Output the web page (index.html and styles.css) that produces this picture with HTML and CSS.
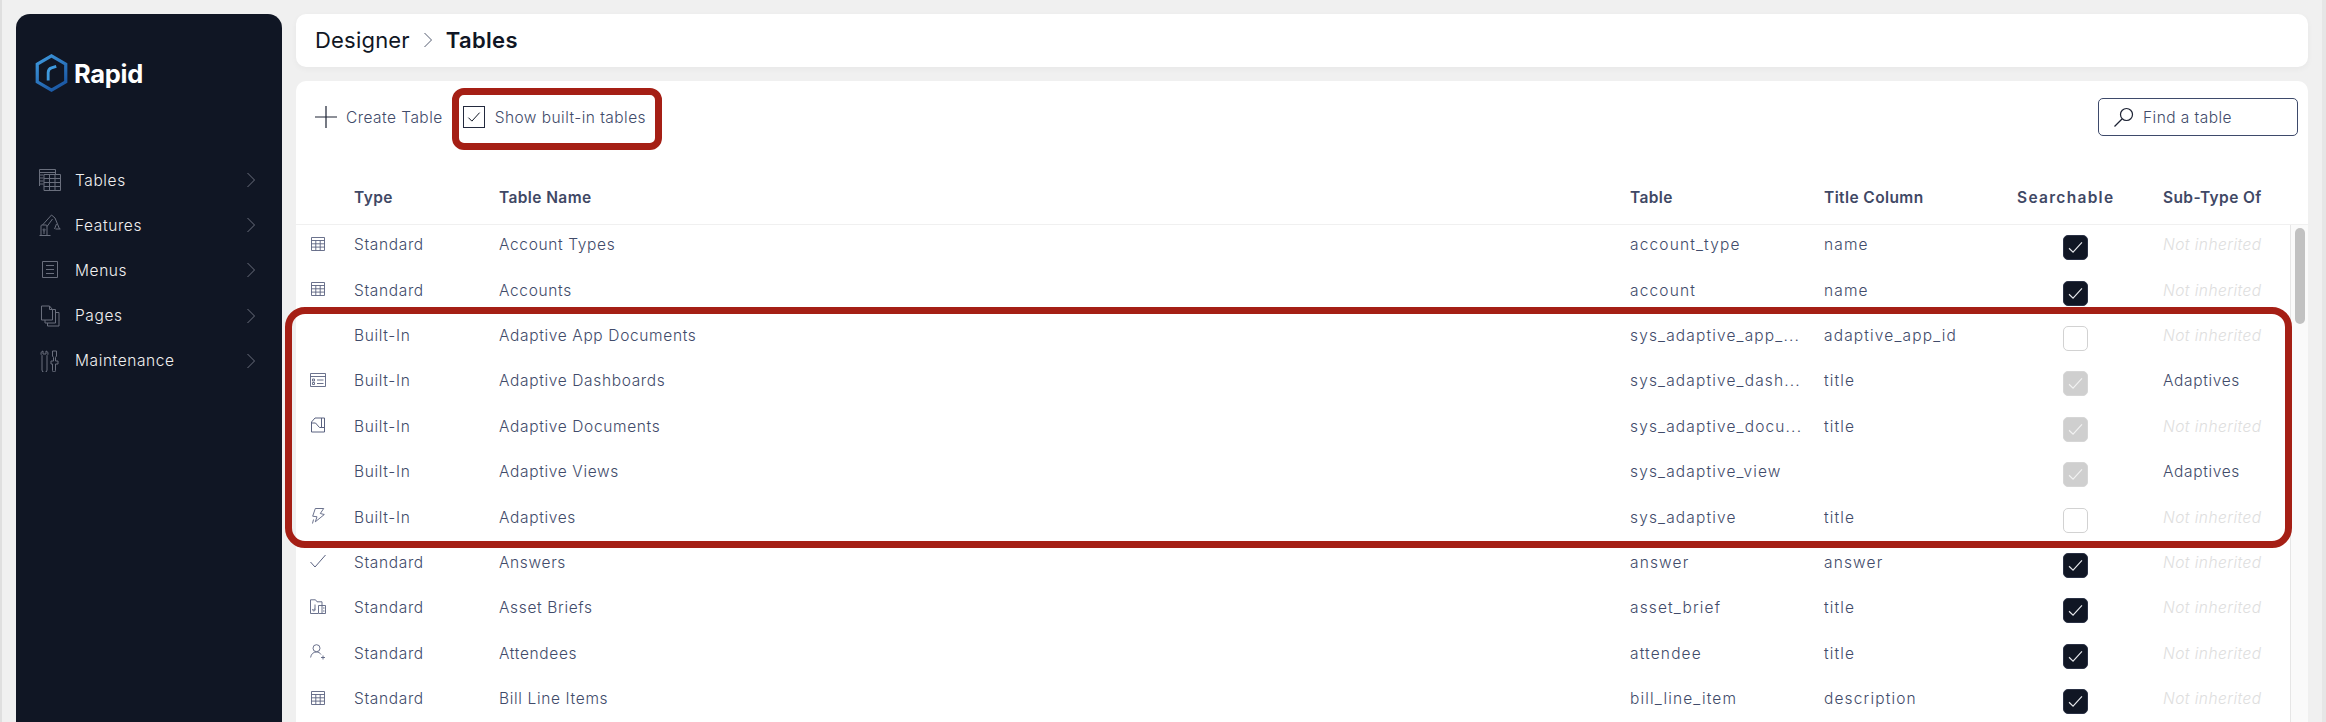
FILE: index.html
```html
<!DOCTYPE html>
<html lang="en">
<head>
    <meta charset="UTF-8">
    <title>Designer - Tables</title>
    <link rel="stylesheet" href="styles.css">
</head>
<body>
    <svg class="defs" width="0" height="0">
        <defs>
            <linearGradient id="hexGrad" x1="0" y1="0" x2="0.6" y2="1">
                <stop offset="0" stop-color="#3f9ade"/>
                <stop offset="1" stop-color="#1c5aa6"/>
            </linearGradient>
            <symbol id="i-grid" viewBox="0 0 16 16">
                <path d="M1.5 1.5h13v13h-13zM1.5 4.5h13M1.5 7.8h13M1.5 11.1h13M5.8 4.500v10M10.2 4.5v10" fill="none" stroke="currentColor" stroke-width=".9"/>
            </symbol>
            <symbol id="i-dash" viewBox="0 0 16 16">
                <path d="M.5 1.5h15v13H.5zM.5 4.5h15M7 8h6.5M7 11.5h6.5M2.5 7h2v2h-2zM2.500 10.5h2v2h-2z" fill="none" stroke="currentColor" stroke-width=".9"/>
            </symbol>
            <symbol id="i-doc" viewBox="0 0 16 16">
                <path d="M1.5 15V5L5 1h9.5v14zM1.5 6h4l4 4.5h5M11.5 1v9.5" fill="none" stroke="currentColor"/>
            </symbol>
            <symbol id="i-bolt" viewBox="0 0 16 16">
                <path d="M5.3.5h8.400l-3.400 5 4 1-9 7.300L7 8.800l-4.300-.6zM3.500 11.500L2.500 15.500" fill="none" stroke="currentColor" stroke-linejoin="round" stroke-width=".9"/>
            </symbol>
            <symbol id="i-check" viewBox="0 0 16 16">
                <path d="M.5 9l4.500 5L15.500 2" fill="none" stroke="currentColor"/>
            </symbol>
            <symbol id="i-brief" viewBox="0 0 16 16">
                <path d="M8 14.500H.5V.8h5l1.500 2h5v3.700M8.500 6.500h7v8h-7zM12 6.500v8M13 9h1.500M13 12h1.500M3.500 10.500L5 10V5.500M5 10a1.300 1.300 0 1 1-2.200 0" fill="none" stroke="currentColor" stroke-width=".9"/>
            </symbol>
            <symbol id="i-person" viewBox="0 0 16 16">
                <circle cx="6.5" cy="4.2" r="3.5" fill="none" stroke="currentColor" stroke-width=".9"/>
                <path d="M.6 13.500c.5-3.500 2.700-5.500 5.900-5.500 2 0 3.500.8 4.500 2.500M13 11.500v4M11 13.500h4" fill="none" stroke="currentColor" stroke-width=".9"/>
            </symbol>
            <symbol id="i-tick" viewBox="0 0 16 16">
                <path d="M3.5 8.500l2.800 2.800 6.200-6.800" fill="none" stroke="currentColor" stroke-width=".8"/>
            </symbol>
            <symbol id="i-chevron" viewBox="0 0 8 16">
                <path d="M.5 1l7 7-7 7" fill="none" stroke="currentColor"/>
            </symbol>
        </defs>
    </svg>

    <div class="page">
        <aside class="sidebar">
            <div class="logo">
                <svg class="logo-mark" viewBox="0 0 34 40">
                    <path d="M17 2l15 8.700v18.600L17 38 2 29.300V10.700z" fill="none" stroke="url(#hexGrad)" stroke-width="3.4"/>
                    <path d="M13.500 28v-8.500q0-4 3.500-5l5-1.500" fill="none" stroke="#3f9ade" stroke-width="3"/>
                </svg>
                <span class="logo-text">Rapid</span>
            </div>
            <nav class="nav">
                <a class="nav-item">
                    <svg class="nav-icon" viewBox="0 0 22 22"><path d="M.5 17V.5h16V5M.5 3.500h16M.5 6h4M.5 9h4M.5 12h4M.5 15h4M5 5.500h16.500v16H5zM5 9.500h16.500M5 13.500h16.500M5 17.500h16.500M10.500 5.500v16M16 5.500v16" fill="none" stroke="currentColor"/></svg>
                    <span class="nav-label">Tables</span>
                    <svg class="nav-chevron"><use href="#i-chevron"/></svg>
                </a>
                <a class="nav-item">
                    <svg class="nav-icon" viewBox="0 0 22 22"><path d="M.5 21.500h11M2 21.500V12q0-1 1-1h4q1 0 1 1v9.500M5 15a1 1 0 1 0 .1 0M5 17v3M3.500 11l9-10 3.500 3M8 12.500L13.500 5M16 4l4.500 11M16.500 15h5M17.500 10l-2 5" fill="none" stroke="currentColor"/></svg>
                    <span class="nav-label">Features</span>
                    <svg class="nav-chevron"><use href="#i-chevron"/></svg>
                </a>
                <a class="nav-item">
                    <svg class="nav-icon" viewBox="0 0 22 22"><path d="M3.500 2.500h15v16h-15zM7 6.500h8M7 10.500h8M7 14.500h8" fill="none" stroke="currentColor"/></svg>
                    <span class="nav-label">Menus</span>
                    <svg class="nav-chevron"><use href="#i-chevron"/></svg>
                </a>
                <a class="nav-item">
                    <svg class="nav-icon" viewBox="0 0 22 22"><path d="M2.500 1h8l3 3.500V15h-11zM10.500 1v3.500h3M13.500 4.500h3V18H6v-3M16.500 7.500H20V21H8.500v-3" fill="none" stroke="currentColor"/></svg>
                    <span class="nav-label">Pages</span>
                    <svg class="nav-chevron"><use href="#i-chevron"/></svg>
                </a>
                <a class="nav-item">
                    <svg class="nav-icon" viewBox="0 0 22 22"><path d="M4 1v3h3V1a2.500 2.500 0 0 1 1 4.500V20a2.500 2.500 0 0 1-5 0V5.500A2.500 2.500 0 0 1 4 1zM13.500 1h4v5l-1 1.500V11H19v3h-2.500v6.500a1.500 1.500 0 0 1-3 0V14H12v-3h2.500V7.500l-1-1.500z" fill="none" stroke="currentColor"/></svg>
                    <span class="nav-label">Maintenance</span>
                    <svg class="nav-chevron"><use href="#i-chevron"/></svg>
                </a>
            </nav>
        </aside>

        <main class="content">
            <header class="crumbs">
                <span class="crumb">Designer</span>
                <svg class="crumb-sep"><use href="#i-chevron"/></svg>
                <span class="crumb crumb-current">Tables</span>
            </header>

            <section class="panel">
                <div class="toolbar">
                    <a class="create-btn">
                        <svg class="plus" viewBox="0 0 22 22"><path d="M11 0v22M0 11h22" stroke="#1c2233" stroke-width="1.2"/></svg>
                        Create Table
                    </a>
                    <label class="show-builtin">
                        <span class="toggle"><svg viewBox="0 0 16 16"><use href="#i-tick"/></svg></span>
                        Show built-in tables
                    </label>
                    <div class="search">
                        <svg class="search-icon" viewBox="0 0 20 20"><circle cx="12.5" cy="7.5" r="6" fill="none" stroke="#1c2233" stroke-width="1.2"/><path d="M8 12L.5 19.500" stroke="#1c2233" stroke-width="1.2"/></svg>
                        <span>Find a table</span>
                    </div>
                </div>

                <div class="row head-row">
                    <span></span>
                    <span>Type</span>
                    <span>Table Name</span>
                    <span>Table</span>
                    <span>Title Column</span>
                    <span class="head-wide">Searchable</span>
                    <span>Sub-Type Of</span>
                </div>

                <div class="table-body">
                    <div class="rows">
                        <div class="row">
                            <svg class="row-icon"><use href="#i-grid"/></svg>
                            <span>Standard</span><span>Account Types</span><span class="key">account_type</span><span class="key">name</span>
                            <span class="box on"><svg viewBox="0 0 16 16"><use href="#i-tick"/></svg></span>
                            <span class="muted">Not inherited</span>
                        </div>
                        <div class="row">
                            <svg class="row-icon"><use href="#i-grid"/></svg>
                            <span>Standard</span><span>Accounts</span><span class="key">account</span><span class="key">name</span>
                            <span class="box on"><svg viewBox="0 0 16 16"><use href="#i-tick"/></svg></span>
                            <span class="muted">Not inherited</span>
                        </div>
                        <div class="row">
                            <span></span>
                            <span>Built-In</span><span>Adaptive App Documents</span><span class="key">sys_adaptive_app_...</span><span class="key">adaptive_app_id</span>
                            <span class="box"></span>
                            <span class="muted">Not inherited</span>
                        </div>
                        <div class="row">
                            <svg class="row-icon"><use href="#i-dash"/></svg>
                            <span>Built-In</span><span>Adaptive Dashboards</span><span class="key">sys_adaptive_dash...</span><span class="key">title</span>
                            <span class="box off"><svg viewBox="0 0 16 16"><use href="#i-tick"/></svg></span>
                            <span>Adaptives</span>
                        </div>
                        <div class="row">
                            <svg class="row-icon"><use href="#i-doc"/></svg>
                            <span>Built-In</span><span>Adaptive Documents</span><span class="key">sys_adaptive_docu...</span><span class="key">title</span>
                            <span class="box off"><svg viewBox="0 0 16 16"><use href="#i-tick"/></svg></span>
                            <span class="muted">Not inherited</span>
                        </div>
                        <div class="row">
                            <span></span>
                            <span>Built-In</span><span>Adaptive Views</span><span class="key">sys_adaptive_view</span><span></span>
                            <span class="box off"><svg viewBox="0 0 16 16"><use href="#i-tick"/></svg></span>
                            <span>Adaptives</span>
                        </div>
                        <div class="row">
                            <svg class="row-icon"><use href="#i-bolt"/></svg>
                            <span>Built-In</span><span>Adaptives</span><span class="key">sys_adaptive</span><span class="key">title</span>
                            <span class="box"></span>
                            <span class="muted">Not inherited</span>
                        </div>
                        <div class="row">
                            <svg class="row-icon"><use href="#i-check"/></svg>
                            <span>Standard</span><span>Answers</span><span class="key">answer</span><span class="key">answer</span>
                            <span class="box on"><svg viewBox="0 0 16 16"><use href="#i-tick"/></svg></span>
                            <span class="muted">Not inherited</span>
                        </div>
                        <div class="row">
                            <svg class="row-icon"><use href="#i-brief"/></svg>
                            <span>Standard</span><span>Asset Briefs</span><span class="key">asset_brief</span><span class="key">title</span>
                            <span class="box on"><svg viewBox="0 0 16 16"><use href="#i-tick"/></svg></span>
                            <span class="muted">Not inherited</span>
                        </div>
                        <div class="row">
                            <svg class="row-icon"><use href="#i-person"/></svg>
                            <span>Standard</span><span>Attendees</span><span class="key">attendee</span><span class="key">title</span>
                            <span class="box on"><svg viewBox="0 0 16 16"><use href="#i-tick"/></svg></span>
                            <span class="muted">Not inherited</span>
                        </div>
                        <div class="row">
                            <svg class="row-icon"><use href="#i-grid"/></svg>
                            <span>Standard</span><span>Bill Line Items</span><span class="key">bill_line_item</span><span class="key">description</span>
                            <span class="box on"><svg viewBox="0 0 16 16"><use href="#i-tick"/></svg></span>
                            <span class="muted">Not inherited</span>
                        </div>
                    </div>
                    <div class="scroll-track"><div class="scroll-thumb"></div></div>
                </div>
            </section>
        </main>

        <!-- red callouts drawn on top of the screenshot -->
        <div class="callout callout-toggle"></div>
        <div class="callout callout-rows"></div>
    </div>
</body>
</html>
```

FILE: styles.css
```css
* {
    box-sizing: border-box;
}
html, body {
    margin: 0;
    height: 100%;
}
body {
    font-family: Inter, "Open Sans", sans-serif;
    font-size: 15.5px;
    font-weight: 300;
    color: #414b6a;
    background: #f0f0f0;
    overflow: hidden;
}
.defs {
    position: absolute;
}
.page {
    position: relative;
    display: flex;
    gap: 14px;
    height: 100vh;
    padding: 14px 14px 0 14px;
    border-left: 2px solid #dfdfdf;
    border-right: 4px solid #e6e6e6;
    overflow: hidden;
}

/* sidebar */
.sidebar {
    flex: 0 0 266px;
    background: #101624;
    border-radius: 14px 14px 0 0;
    padding: 40px 0 0 19px;
}
.logo {
    display: flex;
    align-items: center;
    gap: 6px;
    height: 38px;
}
.logo-mark {
    width: 33px;
    height: 38px;
}
.logo-text {
    font-size: 25.5px;
    font-weight: 700;
    color: #fff;
    letter-spacing: -0.3px;
}
.nav {
    margin-top: 65.5px;
}
.nav-item {
    display: flex;
    align-items: center;
    height: 45.2px;
    color: #f0f0f0;
}
.nav-icon {
    width: 22px;
    height: 22px;
    margin: 0 14px 0 4px;
    color: #6a6f7d;
    flex-shrink: 0;
}
.nav-label {
    flex: 1;
    font-size: 15.5px;
    font-weight: 300;
    letter-spacing: 0.6px;
}
.nav-chevron {
    width: 8px;
    height: 16px;
    margin-right: 27px;
    color: #6a6f7d;
}

/* main column */
.content {
    flex: 1;
    min-width: 0;
    display: flex;
    flex-direction: column;
    gap: 14px;
}
.crumbs {
    display: flex;
    align-items: center;
    height: 53px;
    padding: 0 20px 2px 19px;
    background: #fff;
    border-radius: 10px;
    box-shadow: 0 2px 6px rgba(0, 0, 0, 0.04);
}
.crumb {
    font-size: 22px;
    font-weight: 400;
    color: #101624;
    letter-spacing: 0.2px;
}
.crumb-current {
    font-weight: 600;
    letter-spacing: 0.3px;
}
.crumb-sep {
    width: 8px;
    height: 16px;
    margin: 0 14px;
    color: #555c70;
}
.panel {
    flex: 1;
    min-height: 0;
    background: #fff;
    border-radius: 10px 10px 0 0;
}

/* toolbar */
.toolbar {
    display: flex;
    align-items: center;
    height: 72px;
    padding: 0 10px 0 19px;
    letter-spacing: 0.45px;
}
.create-btn {
    display: flex;
    align-items: center;
    gap: 9px;
}
.plus {
    width: 22px;
    height: 22px;
}
.show-builtin {
    display: flex;
    align-items: center;
    gap: 10px;
    margin-left: 20px;
}
.toggle {
    flex-shrink: 0;
    width: 22px;
    height: 22px;
    border: 1.5px solid #232a3e;
    color: #101624;
    display: flex;
}
.search {
    display: flex;
    align-items: center;
    gap: 9px;
    width: 200px;
    height: 38px;
    margin-left: auto;
    padding-left: 15px;
    border: 1.5px solid #3e4a6b;
    border-radius: 5px;
}
.search-icon {
    width: 20px;
    height: 20px;
}

/* table */
.row {
    display: grid;
    grid-template-columns: 58px 145px 1131px 194px 193px 146px 1fr;
    align-items: center;
    height: 45.4px;
    letter-spacing: 0.65px;
}
.row > span:not(.box) {
    padding-bottom: 6px;
}
.row > .key {
    letter-spacing: 1.15px;
}
.head-row {
    height: 72px;
    font-weight: 600;
    color: #3f4865;
    border-bottom: 1px solid #f0f0f0;
    letter-spacing: 0.4px;
}
.head-row > span:not(.box) {
    padding-bottom: 0;
    padding-top: 18px;
}
.head-row > .head-wide {
    letter-spacing: 1.3px;
}
.table-body {
    display: flex;
}
.rows {
    flex: 1;
    min-width: 0;
}
.row-icon {
    width: 16px;
    height: 16px;
    margin: 0 0 8px 14px;
    color: #5a6280;
}
.box {
    display: block;
    width: 25px;
    height: 25px;
    margin-left: 46px;
    border-radius: 5px;
    border: 1.5px solid #d2d2d2;
    background: #fff;
}
.box svg {
    display: block;
    width: 100%;
    height: 100%;
}
.box.on {
    background: #101624;
    border-color: #2a3145;
    color: #e6e8ec;
}
.box.off {
    background: #cfcfcf;
    border-color: #d6d6d6;
    color: #f2f2f2;
}
.row > .muted {
    font-style: italic;
    font-weight: 300;
    color: #dedede;
    letter-spacing: 0.45px;
}
.scroll-track {
    flex: 0 0 18px;
    padding: 3px 3px 0 4px;
    background: #fafafa;
    border-left: 1px solid #e6e6e6;
}
.scroll-thumb {
    height: 96px;
    background: #c1c1c1;
    border-radius: 5px;
}

/* annotations */
.callout {
    position: absolute;
    border: 7px solid #a51f15;
    pointer-events: none;
}
.callout-toggle {
    left: 450px;
    top: 88px;
    width: 210px;
    height: 62px;
    border-radius: 12px;
}
.callout-rows {
    left: 283px;
    top: 307px;
    width: 2007px;
    height: 241px;
    border-radius: 20px;
}
```
